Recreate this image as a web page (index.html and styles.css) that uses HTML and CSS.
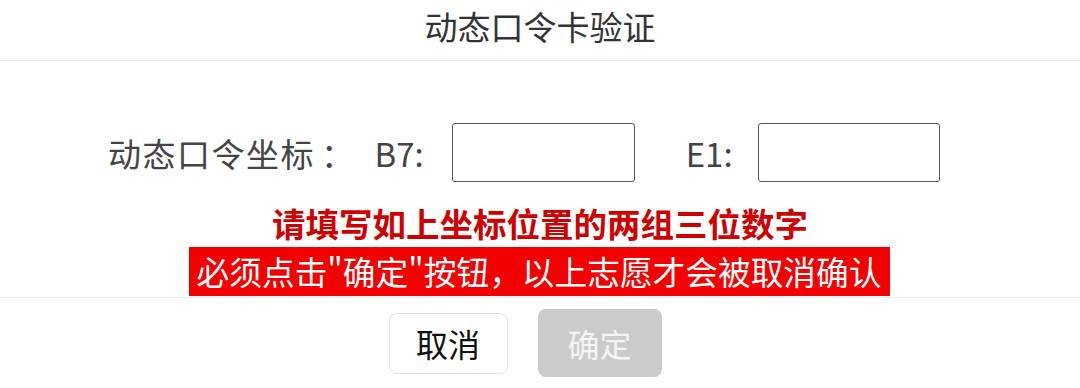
FILE: index.html
```html
<!DOCTYPE html>
<html lang="zh-CN">

<head>
    <meta charset="UTF-8">
    <meta name="viewport" content="width=device-width, initial-scale=1.0">
    <title>动态口令卡验证</title>
    <link rel="stylesheet" href="styles.css">
</head>

<body>
    <div class="dialog">
        <div class="dialog-header">动态口令卡验证</div>

        <div class="dialog-body">
            <div class="coord-row">
                <span class="coord-label">动态口令坐标<span class="colon">：</span></span>
                <div class="field field-first">
                    <label for="codeB7">B7:</label>
                    <input type="text" id="codeB7" class="code-input">
                </div>
                <div class="field field-second">
                    <label for="codeE1">E1:</label>
                    <input type="text" id="codeE1" class="code-input code-input-narrow">
                </div>
            </div>

            <p class="hint">请填写如上坐标位置的两组三位数字</p>
            <p class="warning"><span class="warning-bar">必须点击"确定"按钮，以上志愿才会被取消确认</span></p>
        </div>

        <div class="dialog-footer">
            <button type="button" class="btn btn-cancel">取消</button>
            <button type="button" class="btn btn-confirm" disabled>确定</button>
        </div>
    </div>
</body>

</html>
```

FILE: styles.css
```css
body {
    margin: 0;
    background: #fff;
    font-family: "Noto Sans CJK SC", "Noto Sans", sans-serif;
    color: #333;
}

.dialog {
    width: 1080px;
    height: 388px;
    overflow: hidden;
}

.dialog-header {
    height: 60px;
    line-height: 52px;
    text-align: center;
    font-size: 33px;
    color: #333;
    border-bottom: 1px solid #ececec;
}

.dialog-body {
    padding-top: 62px;
}

.coord-row {
    display: flex;
    align-items: center;
    padding-left: 108px;
    height: 59px;
    font-size: 33px;
    color: #444;
}

.coord-label {
    letter-spacing: 1.5px;
}

.colon {
    margin-left: 6px;
}

.field {
    display: flex;
    align-items: center;
    gap: 28px;
}

.field-first {
    margin-left: 19px;
}

.field-second {
    margin-left: 51px;
    gap: 25px;
}

.code-input {
    width: 183px;
    height: 59px;
    box-sizing: border-box;
    border: 1.5px solid #555;
    border-radius: 3px;
    background: #fff;
    font-size: 28px;
    padding: 0 8px;
}

.code-input-narrow {
    width: 182px;
}

.hint {
    margin: 21px 0 0;
    text-align: center;
    font-size: 33.5px;
    line-height: 40px;
    font-weight: bold;
    color: #d00000;
}

.warning {
    margin: 4px 0 0;
    text-align: center;
    line-height: 0;
}

.warning-bar {
    display: inline-block;
    width: 701px;
    height: 49px;
    line-height: 47px;
    background: #f30000;
    color: #fff;
    font-size: 32.7px;
    white-space: nowrap;
    margin-left: -2px;
}

.dialog-footer {
    display: flex;
    justify-content: center;
    align-items: center;
    gap: 30px;
    height: 90px;
    margin-top: 1px;
    border-top: 1px solid #ececec;
    padding-right: 30px;
}

.btn {
    font-family: "Noto Sans CJK SC", sans-serif;
    font-size: 32px;
    border-radius: 8px;
    cursor: pointer;
}

.btn-cancel {
    width: 119px;
    height: 61px;
    background: #fff;
    color: #111;
    border: 1px solid #e2e2e2;
}

.btn-confirm {
    width: 124px;
    height: 68px;
    background: #cbcbcb;
    color: #f4f4f4;
    border: none;
}
```
